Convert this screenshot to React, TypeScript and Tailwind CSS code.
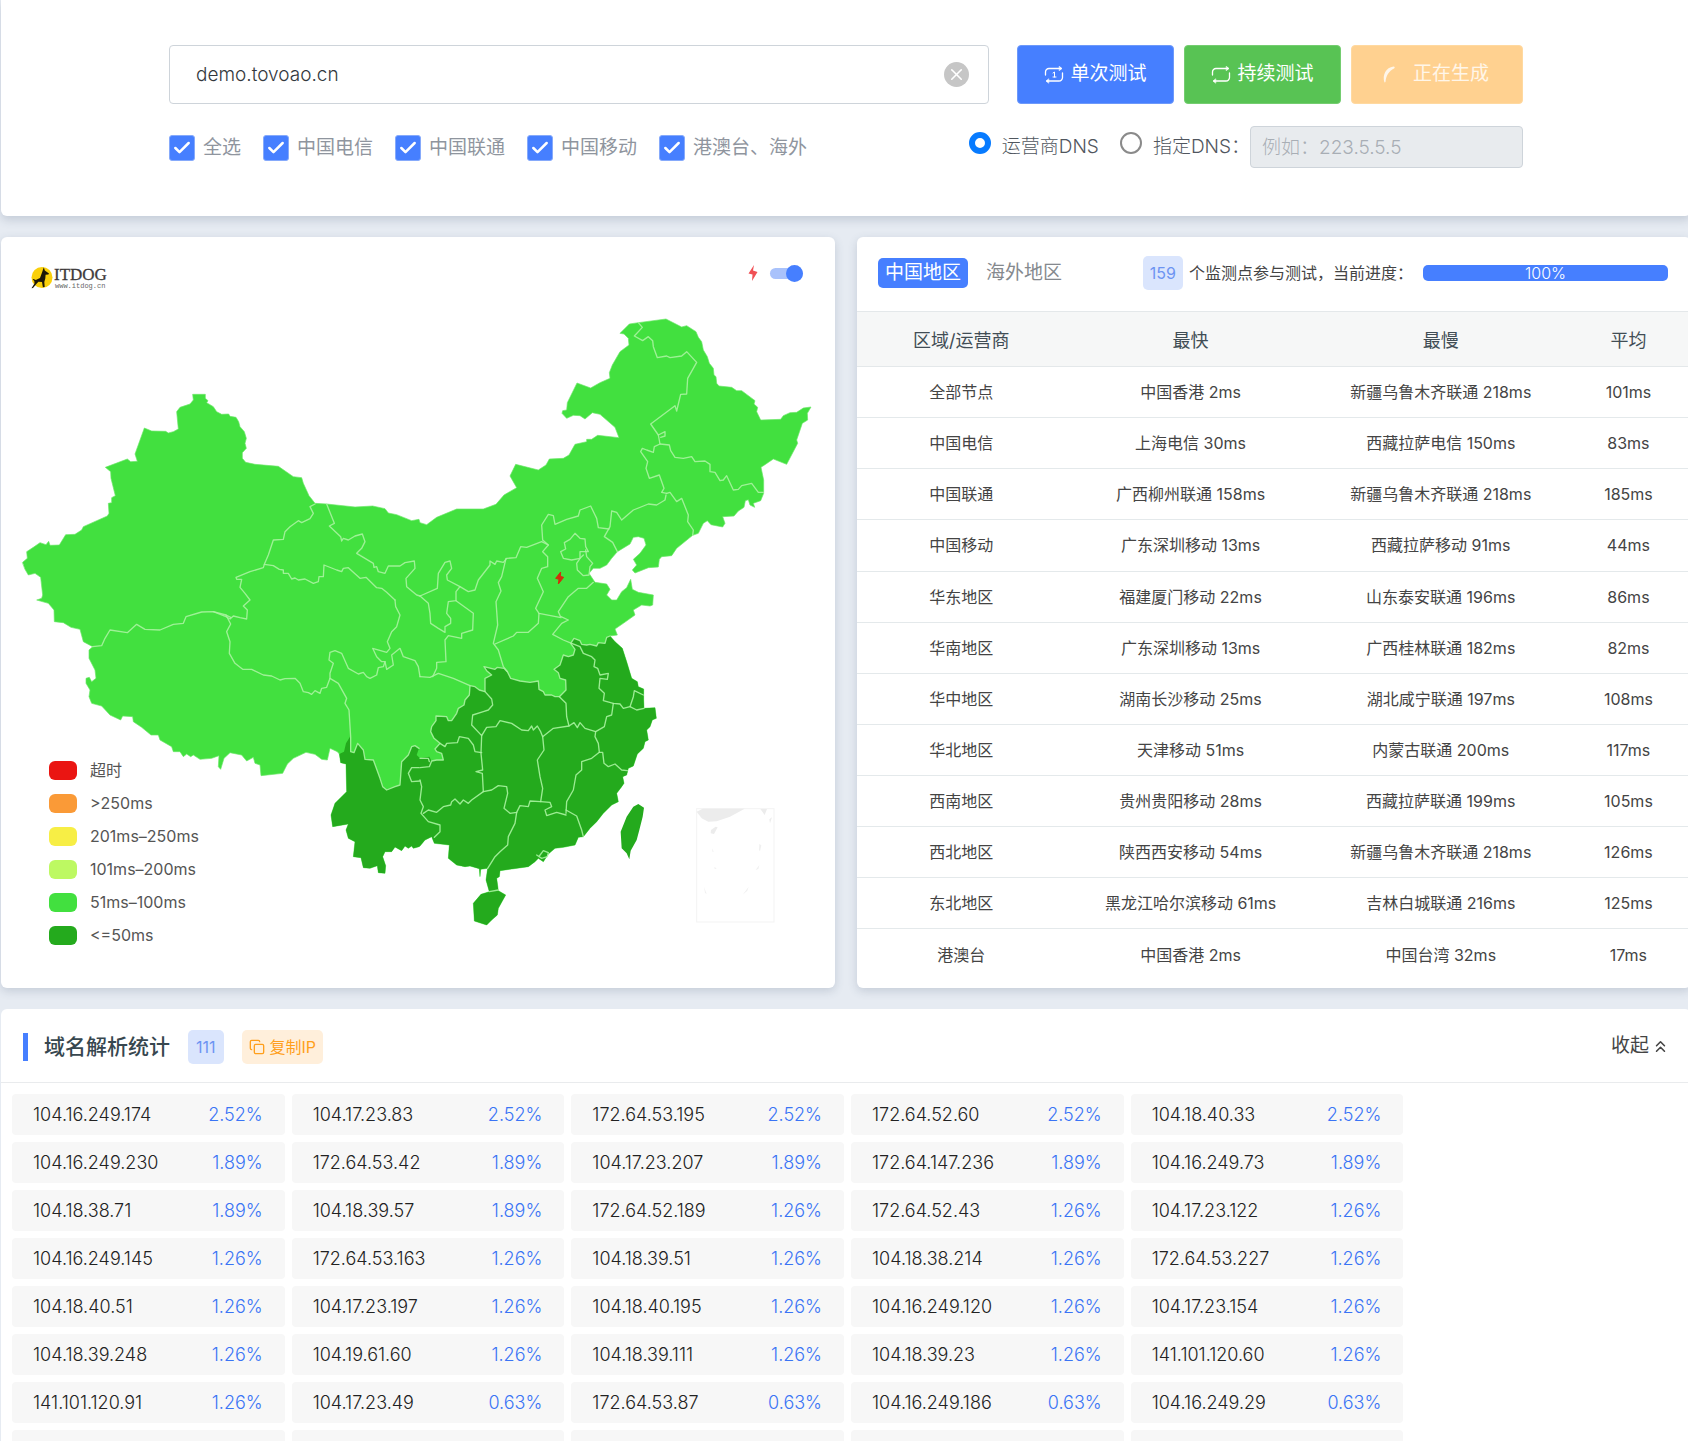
import { useState } from "react";
import { Check, ChevronsUp, Copy, X } from "lucide-react";

const carriers = ["全选", "中国电信", "中国联通", "中国移动", "港澳台、海外"];

const legend = [
  { color: "bg-[#ea1512]", label: "超时" },
  { color: "bg-[#fa9a37]", label: ">250ms" },
  { color: "bg-[#f7ee45]", label: "201ms–250ms" },
  { color: "bg-[#bdf962]", label: "101ms–200ms" },
  { color: "bg-[#42e03f]", label: "51ms–100ms" },
  { color: "bg-[#24aa1d]", label: "<=50ms" },
];

const rows = [
  ["全部节点", "中国香港 2ms", "新疆乌鲁木齐联通 218ms", "101ms"],
  ["中国电信", "上海电信 30ms", "西藏拉萨电信 150ms", "83ms"],
  ["中国联通", "广西柳州联通 158ms", "新疆乌鲁木齐联通 218ms", "185ms"],
  ["中国移动", "广东深圳移动 13ms", "西藏拉萨移动 91ms", "44ms"],
  ["华东地区", "福建厦门移动 22ms", "山东泰安联通 196ms", "86ms"],
  ["华南地区", "广东深圳移动 13ms", "广西桂林联通 182ms", "82ms"],
  ["华中地区", "湖南长沙移动 25ms", "湖北咸宁联通 197ms", "108ms"],
  ["华北地区", "天津移动 51ms", "内蒙古联通 200ms", "117ms"],
  ["西南地区", "贵州贵阳移动 28ms", "西藏拉萨联通 199ms", "105ms"],
  ["西北地区", "陕西西安移动 54ms", "新疆乌鲁木齐联通 218ms", "126ms"],
  ["东北地区", "黑龙江哈尔滨移动 61ms", "吉林白城联通 216ms", "125ms"],
  ["港澳台", "中国香港 2ms", "中国台湾 32ms", "17ms"],
];

const ips = [
  ["104.16.249.174", "2.52%"], ["104.17.23.83", "2.52%"], ["172.64.53.195", "2.52%"], ["172.64.52.60", "2.52%"], ["104.18.40.33", "2.52%"],
  ["104.16.249.230", "1.89%"], ["172.64.53.42", "1.89%"], ["104.17.23.207", "1.89%"], ["172.64.147.236", "1.89%"], ["104.16.249.73", "1.89%"],
  ["104.18.38.71", "1.89%"], ["104.18.39.57", "1.89%"], ["172.64.52.189", "1.26%"], ["172.64.52.43", "1.26%"], ["104.17.23.122", "1.26%"],
  ["104.16.249.145", "1.26%"], ["172.64.53.163", "1.26%"], ["104.18.39.51", "1.26%"], ["104.18.38.214", "1.26%"], ["172.64.53.227", "1.26%"],
  ["104.18.40.51", "1.26%"], ["104.17.23.197", "1.26%"], ["104.18.40.195", "1.26%"], ["104.16.249.120", "1.26%"], ["104.17.23.154", "1.26%"],
  ["104.18.39.248", "1.26%"], ["104.19.61.60", "1.26%"], ["104.18.39.111", "1.26%"], ["104.18.39.23", "1.26%"], ["141.101.120.60", "1.26%"],
  ["141.101.120.91", "1.26%"], ["104.17.23.49", "0.63%"], ["172.64.53.87", "0.63%"], ["104.16.249.186", "0.63%"], ["104.16.249.29", "0.63%"],
  ["", ""], ["", ""], ["", ""], ["", ""], ["", ""],
];

// The map is kept in four sheets, each with its own origin.
const sheet = (dx: number, dy: number) => (points: string) =>
  points
    .split(" ")
    .map((p) => {
      const [x, y] = p.split(",").map(Number);
      return `${x + dx},${y + dy}`;
    })
    .join(" ");

const nw = sheet(0, 0);
const ne = sheet(1260, 0);
const sw = sheet(0, 1110);
const se = sheet(1260, 1110);

const eastCoast =
  "570,108 585,125 607,145 620,185 635,235 652,245 655,260 671,267 671,300 672,325 705,323 709,355 697,360 690,380 680,390 685,420 675,425 670,445 652,462 640,498 625,505 620,525 608,530 612,550 605,560 590,580 595,605 575,615 550,640 530,665 510,685 490,710 475,712 465,735 430,742 405,745 385,762 370,785 355,775 345,785 325,800 240,812 238,830 230,835 235,872 257,885 235,925 232,945 215,960 200,975 163,963 160,910 183,883 208,875 198,840 203,805 182,808 180,830 178,806 150,798 135,800 110,795 85,775 88,735 43,730 35,710 15,720 0,738";
const yunnanCoast =
  "1257,740 1240,745 1235,738 1225,745 1215,738 1205,752 1185,741 1175,755 1155,755 1148,770 1157,797 1155,820 1135,818 1132,797 1110,805 1090,803 1083,773 1060,770 1065,725 1045,715 1038,690 1045,672 998,680 993,645 1005,610 1040,575 1038,492 1022,488 1018,462";

const mainland = [
  nw("68,997 82,985 80,965 100,952 120,938 138,944 146,934 150,946 178,945 197,914 225,913 245,900 250,890 322,858 327,850 325,820 335,818 335,803 346,797 333,745 332,725 316,712 382,687 392,695 412,694 405,672 433,594 455,603 497,604 505,609 520,605 535,597 530,545 540,532 570,522 580,510 578,493 616,493 616,505 624,512 620,518 640,530 650,545 665,553 686,552 690,559 708,562 716,575 720,590 733,605 739,625 735,640 739,655 727,668 727,685 737,697 765,703 835,709 880,740 905,743 910,760 927,797 945,820 980,822 1065,831 1118,828 1155,836 1165,849 1190,854 1235,872 1257,868"),
  ne("0,878 20,884 50,862 110,837 190,837 228,823 252,795 290,773 270,738 287,703 355,720 378,705 388,687 430,685 447,675 465,643 500,635 500,628 515,628 533,616 597,623 585,592 540,553 517,548 495,567 480,557 460,556 440,565 426,550 428,542 440,540 442,518 471,459 512,474 540,458 570,445 568,428 577,405 600,365 627,345 625,325 612,312 600,310 628,282 655,278 738,267 785,291 800,287 828,305 835,322 845,335 850,360 862,380 868,400 880,415 882,435 888,440 890,460 897,468 935,472 950,482 965,482 1005,512 1002,522 1013,532 1010,545 1022,570 1082,568 1090,557 1110,548 1130,547 1150,534 1173,531 1162,550 1163,570 1147,580 1130,630 1133,640 1100,703 1060,687 1023,712 1031,750 1031,790 1022,812 1000,820 1004,832 990,825 985,809 976,812 972,832 955,843 942,858 908,860 915,880 908,891 873,884 862,872 850,880 835,910 818,916 770,955 755,977 725,980 718,988 715,1011 685,1013 645,1029 637,1020 650,1005 640,988 660,970 678,945 672,925 655,920 640,922 630,942 592,965 575,985 560,1005 540,1015 520,1015 507,1030 525,1057 560,1062 570,1078 560,1095 575,1110 590,1110 605,1085 620,1073 632,1048 637,1078 655,1087 700,1095 698,1125 690,1128 665,1125 640,1140 645,1155 610,1180 585,1197 592,1215"),
  se(eastCoast),
  sw(yunnanCoast),
  sw("1012,455 990,445 982,480 965,478 945,463 918,457 880,475 862,492 848,520 783,527 780,495 765,490 760,472 740,483 725,465 690,458 672,475 662,508 655,500 657,467 635,475 600,478 580,465 572,470 560,462 550,470 540,455 520,455 515,440 480,420 475,405 453,405 425,382 400,365 398,350 368,348 362,360 330,345 305,318 275,310 267,290 270,270 258,250 258,235 268,232 275,245 288,235 285,210 267,175 267,150 278,140 250,125 240,88 213,82 190,68 163,65 162,30 145,10 110,0"),
  nw("125,1105 128,1095 122,1042 105,1030 85,1035 75,1018"),
].join(" ");

const south = [
  se(eastCoast),
  sw(yunnanCoast),
  sw("1032,455 1038,430 1050,410 1052,455 1062,458 1073,430 1090,450 1095,478 1120,480 1140,535 1148,560 1160,570 1185,560 1200,555 1205,485 1225,465 1235,440 1245,437 1257,445 1250,465 1257,472"),
  se("0,475 28,470 35,483 50,480 70,480 65,460 50,455 45,447 60,430 42,415 32,395 35,380 48,362 48,348 80,350 85,362 95,362 110,340 115,325 132,315 135,300 148,285 150,257 165,260 178,270 195,275 195,235 215,225 200,212 192,200 225,208 232,202 252,205 262,215 272,235 300,243 330,247 355,243 357,268 370,275 375,285 395,285 405,290 418,290 438,270 437,240 420,235 415,218 402,208 420,195 430,165 445,170 460,165 465,148 452,130 462,115 480,122 485,133 500,135 510,133 530,138 535,128 555,130 560,112"),
].join(" ");

const taiwan = se("655,612 672,623 668,650 658,690 650,720 632,752 628,778 620,760 605,745 602,695 620,650 640,620");

const borders = [
  nw("945,822 930,830 940,850 930,866 905,878 895,872 870,890 855,905 850,928 820,930 805,975 793,1003 790,1013 750,1025 708,1042 710,1048 725,1048 720,1072 735,1090 750,1110 730,1128 742,1140 740,1167 720,1163 700,1158 690,1167 678,1160 640,1145"),
  sw("278,140 305,137 315,115 330,90 382,98 410,73 435,88 480,90 520,73 550,70 558,50 605,36 640,35 678,45 692,52"),
  nw("980,822 1003,880 988,888 1022,920 1025,933 1030,925 1045,930 1065,918 1087,912 1095,935 1085,955 1070,970 1120,1000 1122,1012 1130,1010 1135,1025 1155,1030 1165,1008 1200,1008 1215,998 1243,993 1245,1015 1218,1045 1220,1070 1250,1095 1260,1098"),
  ne("0,1098 52,1075 55,1030 75,997 90,993 95,1015 80,1035 82,1050 120,1070 145,1085 165,1080 175,1050 210,1005 210,993 225,1003 230,993 250,997 260,985 288,983 302,950 320,952 365,935 385,945"),
  nw("793,1003 820,1007 838,1018 850,1020 850,1030 865,1030 875,1047 885,1044 895,1050 915,1047 940,1060 955,1055 957,1040 970,1040 972,1005 1010,1020 1025,1025 1030,1015 1045,1013 1080,1045 1098,1042 1130,1073 1145,1075 1160,1087 1185,1110"),
  sw("1185,0 1187,20 1200,45 1190,80 1175,95 1162,125 1170,145 1160,157 1118,145 1130,170 1145,185 1155,185 1160,208 1180,195 1175,165 1200,145 1210,170 1245,182 1255,200 1260,230"),
  sw("678,45 692,72 680,95 690,125 688,160 705,190 728,208 755,208 790,225 815,228 840,240 855,236 885,235 900,250 910,275 925,278 935,283 945,272 960,280 965,265 980,262 990,235 990,220 1000,190 987,180 990,157 1005,152 1025,160 1045,205 1075,222 1090,217 1100,230 1110,235 1130,225 1135,203 1150,200 1155,185"),
  sw("990,235 1015,250 1040,295 1035,310 1047,330 1052,410 1052,455 1062,458 1073,430 1090,450 1095,478 1120,480 1140,535 1148,560 1160,570 1185,560 1200,555 1205,485 1225,465 1235,440 1245,437 1257,445"),
  ne("655,278 667,292 643,318 668,332 685,320 698,332 700,350 712,383 740,378 750,383 785,378 800,365 830,397 803,445 800,492 782,493 770,543 765,527 692,582 715,615 720,642 703,650 700,667 680,660 667,655 662,665 683,695 678,715 688,745 718,735 732,775 725,787 740,790"),
  ne("715,615 735,605 735,618 722,622"),
  ne("720,642 748,645 752,662 765,682 790,685 815,680 825,695 855,693 870,703 870,725 885,727 900,752 910,750 920,737 940,780 955,778 965,767 995,760 1015,787 1030,787"),
  ne("740,790 750,787 770,815 785,805 805,855 803,875 820,900 818,916"),
  ne("738,795 735,810 710,825 685,822 640,840 605,870 590,847 575,843 570,890 553,920 578,937 592,965"),
  ne("567,897 535,893 530,865 525,855 512,828 480,840 475,858 440,868 405,883 400,857 385,853 365,885 368,930 385,945 368,965 383,980 383,1010 365,1015 352,1045 370,1085 347,1135 357,1150 423,1163 415,1145 445,1100 475,1075 500,1075 520,1057"),
  ne("465,910 480,925 495,927 497,950 505,965 480,965 480,985 455,990 430,985 422,965 437,957 433,938 450,928 465,910"),
  ne("497,960 500,980 518,1000 510,1010 507,1035 490,1037 472,1020 470,1000 480,985 490,975"),
  ne("258,985 245,1040 235,1058 243,1083 228,1115 233,1185 220,1240 235,1260 250,1310 262,1325"),
  se("357,40 355,70 325,97 290,97 280,108 225,132"),
  se("423,50 445,60 425,70 398,103 430,120 455,130"),
  ne("0,1098 25,1120 30,1150 32,1180 55,1195 75,1207 75,1190 92,1180 92,1165 80,1150 85,1115 108,1112 108,1085 120,1070"),
  se("108,2 160,40 158,90 125,100 125,115 85,107 75,120 78,185 50,187 50,205 38,230"),
  se("0,230 30,232 55,220 100,235 150,257 165,260 178,270 195,275 195,235 215,225 200,212 192,200 225,208 232,202 252,205 262,215 272,235 300,243 330,247 355,243 357,268 370,275 375,285 395,285 405,290 418,290 438,270 437,240 420,235 415,218 402,208 420,195 430,165 445,170 460,165 465,148 452,130 462,115 480,122 485,133 500,135 510,133 530,138 535,128 555,130 560,112 570,108"),
  se("150,257 148,285 135,300 132,315 115,325 110,340 95,362 85,362 80,350 48,348 48,362 35,380 32,395 42,415 60,430 45,447 50,455 65,460 70,480 50,480 35,483 28,500 0,503"),
  se("0,475 25,475 28,485"),
  sw("1257,503 1235,503 1225,520 1235,545 1260,543"),
  se("455,130 480,140 490,160 515,170 525,180 522,200 533,205 540,225 565,220 562,238 540,235 537,265 553,280 550,302 580,310 600,312 610,325 630,320 640,290 643,272 670,285"),
  se("630,320 650,330 672,325"),
  se("580,310 575,345 560,350 553,380 527,395 525,410 535,430 538,457 515,475 485,485 485,510 468,525 460,570 440,605 438,640"),
  se("418,290 438,310 440,350 447,378 400,385 368,410 362,395 352,378 340,390 335,378 325,392 305,390 275,370 240,362 228,380 200,382 185,407 155,375 158,345 190,335 205,330 218,315 215,297 195,275"),
  se("447,378 462,368 472,383 480,368 495,385 527,395"),
  se("538,457 548,457 552,490 565,500 585,492 605,510 622,512"),
  se("368,410 372,450 352,480 360,530 368,565 362,605"),
  se("185,407 183,460 188,510 168,515 187,520 190,575 155,600 145,610 130,600 120,612 105,597 95,605 92,615 70,620 50,637 25,630 10,640"),
  se("60,430 75,440 80,430 112,428 118,410 145,415 160,435 165,455 185,458"),
  se("190,575 215,570 235,557 260,560 263,580 252,625 270,640 290,637 300,617 325,620 330,603 362,605 390,607 395,620 375,630 380,647 410,637 438,645"),
  se("438,630 470,648 485,690 490,710"),
  se("290,637 285,670 265,710 263,735 240,755 225,770 203,805"),
  se("0,540 5,560 0,600 10,620 3,640 25,665 60,675 60,695 43,712"),
  se("208,875 235,870"),
  se("358,768 370,752 385,758 382,770 365,775 350,765"),
];

const RegionMap = () => (
  <svg viewBox="3 21 2502 2253" className="block w-full" role="img" aria-label="中国地区">
    <g strokeLinejoin="round" strokeLinecap="round">
      <polygon points={mainland} fill="#42e03f" stroke="#6be768" strokeWidth="2" />
      <polygon points={south} fill="#24aa1d" />
      <polygon points={taiwan} fill="#24aa1d" />
      {borders.map((b) => (
        <polyline key={b} points={b} fill="none" stroke="#a9f3a0" strokeWidth="4" strokeOpacity="0.9" />
      ))}
    </g>
    <path d="M1682 1026 L1667 1045 1677 1048 1675 1062 1691 1042 1681 1039 Z" fill="#d0300c" stroke="#d0300c" strokeWidth="3" />
    {/* South China Sea inset */}
    <g fill="#ececec">
      <rect x="2090" y="1736" width="232" height="340" fill="none" stroke="#f3f3f3" strokeWidth="3" />
      <path d="M2090 1745 L2108 1736 H2234 L2190 1760 2150 1774 2125 1775 2105 1765 Z" />
      <path d="M2281 1737 h20 l-7 18 z M2133 1800 l14 -10 6 2 -11 20 -10 -2 z M2308 1768 l8 -6 -6 18 z" />
      <path d="M2278 1842 l6 4 -4 18 -3 -4 z M2278 1905 l-11 15 8 -3 z M2246 1970 l-18 24 14 -12 z M2112 1970 l8 22 -5 -3 z M2137 1855 l4 10 -4 0 z M2142 1912 l8 2 -5 4 z" fill="#f0f0f0" />
    </g>
  </svg>
);

const Logo = () => (
  <svg viewBox="0 0 82 26" className="h-[26px] w-[82px]" role="img" aria-label="ITDOG">
    <circle cx="13" cy="12.500" r="10.500" fill="#fad00a" />
    <path
      d="M14.800 2.300 L15.800 5.500 L20 8.500 L19.400 9.500 L16.600 9.800 L16.300 13.500 L15.300 17 L15.700 22 L13.900 22.300 L13 17 L9.500 16.700 L8.200 18 L4 23 L2.500 23.200 L5.500 18.600 L5.300 16 L3.700 14.500 L4.500 14 L6.800 14.900 L11 13 L13.200 7 Z"
      fill="#1d1708"
    />
    <text x="25" y="15" fontFamily="Liberation Serif, serif" fontSize="17" fill="#3d3a3a" stroke="#3d3a3a" strokeWidth="0.300">ITDOG</text>
    <text x="26" y="23" fontFamily="Liberation Mono, monospace" fontSize="7" fill="#666">www.itdog.cn</text>
  </svg>
);

const LoopIcon = ({ once = false }: { once?: boolean }) => (
  <svg viewBox="0 0 20 20" className="size-5" fill="none" stroke="currentColor" strokeWidth="1.300" strokeLinecap="round" strokeLinejoin="round">
    <path d="M1.500 10 V7 a3.500 3.500 0 0 1 3.500 -3.500 H17" />
    <path d="M18.500 8 v4.500 a3.500 3.500 0 0 1 -3.500 3.500 H3" />
    <path d="M15.500 1.500 L18 3.500 l-2.500 2 z M4.500 14 L2 16 l2.500 2 z" fill="currentColor" strokeWidth="0.600" />
    {once && <path d="M9 8 l1.500 -1 V12 M9 12 h3" strokeWidth="1" />}
  </svg>
);

const App = () => {
  const [domain, setDomain] = useState("demo.tovoao.cn");
  const [dns, setDns] = useState("isp");

  return (
    <div className="h-screen overflow-hidden bg-[#e6ebf2] pl-px font-['Inter','Noto_Sans_CJK_SC',sans-serif] text-[#444]">
      <div className="-mr-[3px] flex flex-col gap-[21px]">
        <section className="rounded-b-md bg-white px-[168px] pt-[45px] pb-12 shadow-[0_4px_10px_rgba(60,80,110,0.2)]">
          <div className="flex">
            <div className="mr-7 flex h-[59px] flex-1 items-center rounded border border-[#ced4da] pr-[19px] pl-[26px]">
              <input
                aria-label="域名"
                value={domain}
                onChange={(e) => setDomain(e.target.value)}
                className="min-w-0 flex-1 pt-0.5 text-[19px] font-light text-[#33383d] outline-none"
              />
              <button aria-label="清除" onClick={() => setDomain("")} className="flex size-[25px] items-center justify-center rounded-full bg-[#c6c6c6] text-white">
                <X size={19} strokeWidth={2} />
              </button>
            </div>
            <div className="flex gap-2.5 text-[19px] text-white">
              <button className="flex w-[157px] items-center justify-center gap-1.5 rounded-sm border border-[#6d99fa] bg-[#467fff]">
                <LoopIcon once /> 单次测试
              </button>
              <button className="flex w-[157px] items-center justify-center gap-1.5 rounded-sm border border-[#74cd70] bg-[#58c354]">
                <LoopIcon /> 持续测试
              </button>
              <button className="flex h-[59px] w-[172px] items-center justify-center gap-3 rounded-sm border border-[#ffd9a0] bg-[#ffd190] pr-1 text-white/80" disabled>
                <svg viewBox="0 0 20 20" className="size-5" fill="currentColor">
                  <path d="M3.500 17.500 C1 10 5 2.500 12.500 1.500 C14 1.500 14 3 13 3.500 C8 6 5 10.500 4.500 17 Z" />
                </svg>
                正在生成
              </button>
            </div>
          </div>

          <div className="mt-[22px] flex h-[42px] items-center justify-between text-[19px]">
            <div className="flex gap-[22px] pt-0.5 text-[#8f959e]">
              {carriers.map((name) => (
                <label key={name} className="flex items-center gap-2">
                  <span className="grid size-[26px] place-items-center">
                    <input type="checkbox" defaultChecked className="peer col-start-1 row-start-1 size-[26px] appearance-none rounded-[3px] border border-[#86aafb] checked:bg-[#467fff]" />
                    <Check size={20} strokeWidth={3} className="pointer-events-none invisible col-start-1 row-start-1 text-white peer-checked:visible" />
                  </span>
                  {name}
                </label>
              ))}
            </div>
            <div className="flex items-center font-light text-[#50565e]">
              <label className="flex items-center gap-[11px]">
                <input
                  type="radio"
                  name="dns"
                  checked={dns === "isp"}
                  onChange={() => setDns("isp")}
                  className="mb-2 size-[22px] appearance-none rounded-full border-2 border-[#8a8a8a] checked:border-[6px] checked:border-[#077bff]"
                />
                运营商DNS
              </label>
              <label className="ml-[21px] flex items-center gap-[11px]">
                <input
                  type="radio"
                  name="dns"
                  checked={dns === "custom"}
                  onChange={() => setDns("custom")}
                  className="mb-2 size-[22px] appearance-none rounded-full border-2 border-[#8a8a8a] checked:border-[6px] checked:border-[#077bff]"
                />
                指定DNS：
              </label>
              <input
                aria-label="指定DNS"
                disabled={dns === "isp"}
                placeholder="例如：223.5.5.5"
                className="h-[42px] w-[273px] rounded border border-[#ced4da] bg-[#e8ebee] px-[11px] placeholder:text-[#a8aeb5]"
              />
            </div>
          </div>
        </section>

        <div className="grid grid-cols-2 gap-[22px]">
          <section className="relative rounded-md bg-white shadow-[0_3px_10px_rgba(60,80,110,0.2)]">
            <RegionMap />
            <div className="absolute inset-x-7 top-7 flex items-start justify-between">
              <Logo />
              <label className="flex items-center gap-3 pr-1">
                <svg viewBox="0 0 10 16" className="h-4 w-2.5" aria-label="闪电">
                  <path d="M6 0 L5 5.500 9.500 7 4 16 4.500 9.500 0.500 8.500 Z" fill="#f05055" />
                </svg>
                <input
                  type="checkbox"
                  role="switch"
                  defaultChecked
                  aria-label="闪电"
                  className="relative h-[11px] w-[33px] appearance-none rounded-full bg-[#a9c2fb] before:absolute before:top-[-3px] before:left-0 before:size-[17px] before:rounded-full before:bg-[#467fff] checked:before:left-4"
                />
              </label>
            </div>
            <ul className="absolute bottom-[43px] left-12 flex flex-col gap-[13px] text-base leading-5 text-[#555]">
              {legend.map((item) => (
                <li key={item.label} className="flex items-center gap-[13px]">
                  <span className={`h-[19px] w-7 rounded-md ${item.color}`} />
                  {item.label}
                </li>
              ))}
            </ul>
          </section>

          <section className="flex flex-col rounded-md bg-white pb-2 shadow-[0_3px_10px_rgba(60,80,110,0.2)]">
            <div className="flex h-[74px] items-center pr-[23px] pb-0.5 pl-[21px]">
              <button className="h-[30px] rounded-[5px] bg-[#467fff] px-[7px] text-[19px] text-white">中国地区</button>
              <button className="ml-[18px] text-[19px] text-[#85898e]">海外地区</button>
              <span className="ml-auto flex h-[34px] items-center rounded-[5px] bg-[#dae5fd] px-[7px] text-base text-[#6d94f2]">159</span>
              <span className="ml-1.5 text-base">个监测点参与测试，当前进度：</span>
              <div className="ml-2.5 flex h-4 w-[245px] items-center justify-center rounded-[5px] bg-[#467fff] text-base leading-4 font-light text-white">100%</div>
            </div>
            <table className="w-full flex-1 table-fixed text-center text-base text-[#444]">
              <colgroup>
                <col className="w-1/4" />
                <col className="w-3/10" />
                <col className="w-3/10" />
                <col />
              </colgroup>
              <thead>
                <tr className="h-[55px] border-y border-[#e4e8ea] bg-[#f6f7f7] text-[18px] text-[#414d55]">
                  {["区域/运营商", "最快", "最慢", "平均"].map((h) => (
                    <th key={h} className="pt-0.5 font-normal">{h}</th>
                  ))}
                </tr>
              </thead>
              <tbody>
                {rows.map((row) => (
                  <tr key={row[0]} className="h-[51px] border-b border-[#e4e9eb] last:border-b-0">
                    {row.map((cell, i) => (
                      <td key={i}>{cell}</td>
                    ))}
                  </tr>
                ))}
              </tbody>
            </table>
          </section>
        </div>

        <section className="rounded-t-md bg-white">
          <div className="flex h-[74px] items-center border-b border-[#e9ebed] pt-0.5 pr-[21px] pl-[22px]">
            <span className="h-7 w-[5px] bg-[#467fff]" />
            <h2 className="ml-4 text-[21px] font-medium text-[#37474f]">域名解析统计</h2>
            <span className="ml-[18px] flex h-[34px] items-center rounded-[5px] bg-[#dae5fd] px-2 text-base text-[#6d94f2]">111</span>
            <button className="ml-[18px] flex h-[34px] items-center gap-[5px] rounded-[5px] bg-[#ffefdb] px-[7px] text-base text-[#ff9f1c]">
              <Copy size={16} />
              复制IP
            </button>
            <button className="ml-auto flex items-center gap-0.5 text-[19px] text-[#444]">
              收起 <ChevronsUp size={19} />
            </button>
          </div>
          <ul className="grid grid-cols-6 gap-[7px] py-[11px] pr-2 pl-[11px]">
            {ips.map(([ip, share], i) => (
              <li key={i} className="flex h-[41px] items-center justify-between rounded bg-[#f7f7f7] pt-px pr-[22px] pl-[21px] text-lg font-light [&:nth-child(5n+1)]:col-start-1">
                <span className="text-[#222]">{ip}</span>
                <span className="text-[#3a74f5]">{share}</span>
              </li>
            ))}
          </ul>
        </section>
      </div>
    </div>
  );
};

export default App;
